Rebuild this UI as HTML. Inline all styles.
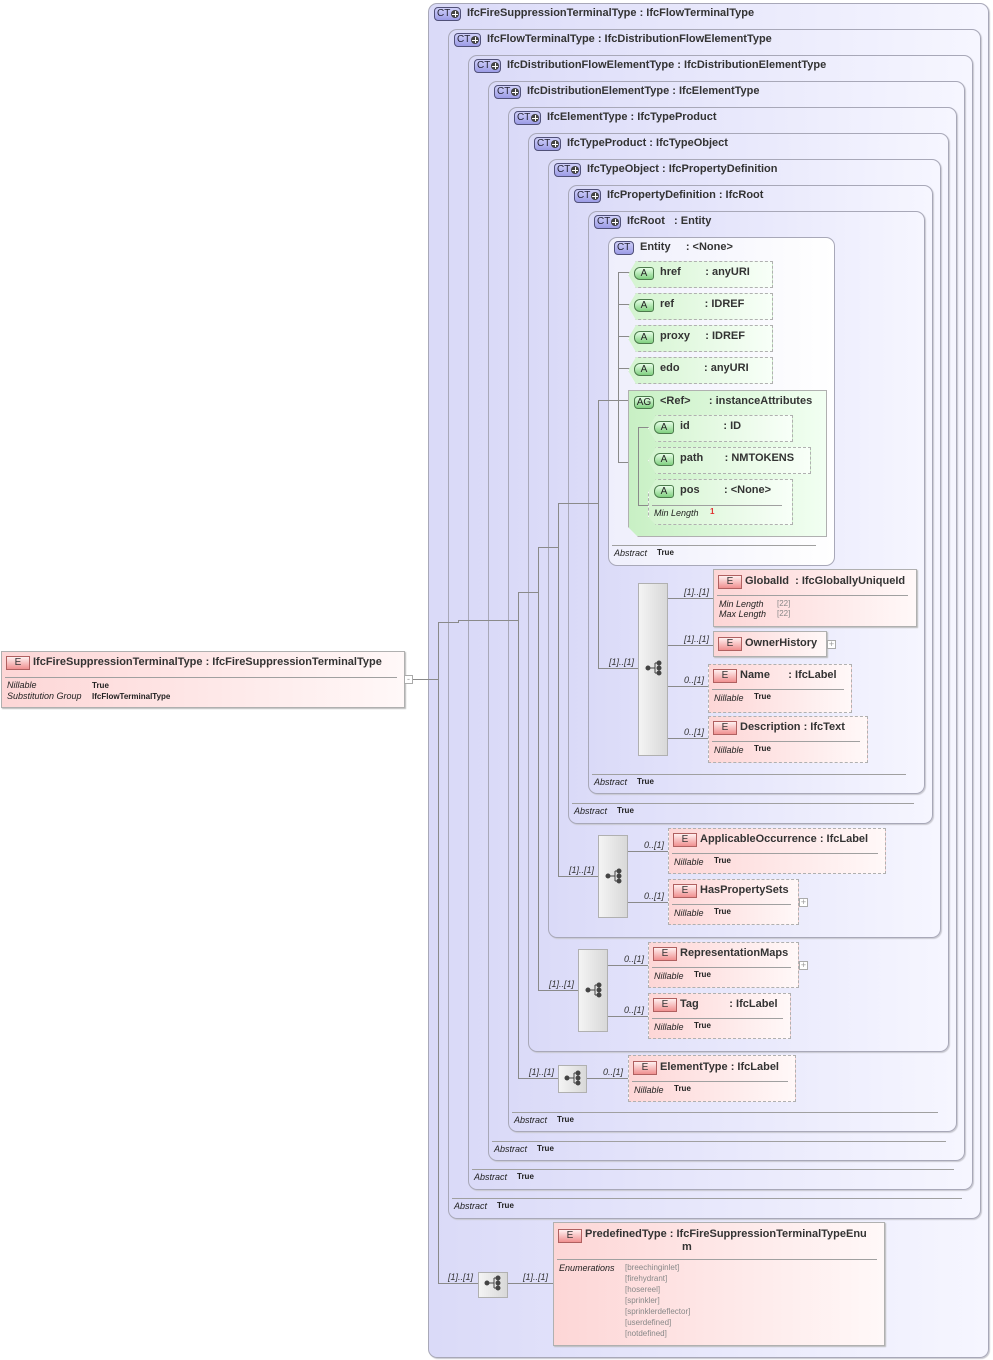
<!DOCTYPE html>
<html><head><meta charset="utf-8"><style>
*{margin:0;padding:0;box-sizing:border-box}
body{width:993px;height:1360px;background:#fff;position:relative;overflow:hidden;font-family:"Liberation Sans",Arial,sans-serif;font-size:11px;color:#222}
div,span{position:absolute}
.ct{border:1px solid #a8a8b8;border-radius:9px;background:linear-gradient(to right,#dadaf8,#f6f6ff);box-shadow:1px 1px 1px #c8c8d0}
.en{border:1px solid #a8a8b8;border-radius:9px;background:linear-gradient(to right,#efeffc,#fff)}
.hd{white-space:pre;font-size:11px;color:#333;font-weight:bold}
.cti{width:27px;height:14px;border:1px solid #505078;border-radius:4px;background:linear-gradient(#d0d0fa,#9c9ce6);font-size:10px;line-height:12px;padding-left:2px;color:#223}
.cti b{position:absolute;left:16px;top:2px;width:8px;height:8px;border-radius:50%;background:#444;}
.cti b:before{content:"";position:absolute;left:1px;top:3.5px;width:6px;height:1px;background:#fff}
.cti b:after{content:"";position:absolute;left:3.5px;top:1px;width:1px;height:6px;background:#fff}
.ei{width:24px;height:14px;border:1px solid #b06060;background:linear-gradient(#fff0f0,#f09090);font-size:10px;line-height:12px;text-align:center;color:#333}
.el{border:1px solid #b0b0b0;background:linear-gradient(to right,#fdd6d6,#fff8f8);box-shadow:1px 1px 1px #bbb}
.eld{border:1px dashed #b0b0b0;background:linear-gradient(to right,#fdd6d6,#fff8f8)}
.at{border:1px dashed #b0b0b0;background:linear-gradient(to right,#d4f4d0,#f8fff8);clip-path:polygon(8px 0,100% 0,100% 100%,8px 100%,0 50%)}
.ai{width:20px;height:13px;border:1px solid #4c7a4c;border-radius:6px 3px 3px 6px;background:linear-gradient(#e8ffe8,#80d080);font-size:10px;line-height:11px;text-align:center;color:#222}
.l{background:#8a8a8a}
.h{height:1px}.v{width:1px}
.it{font-style:italic;font-size:9px;color:#222}
.b8{font-size:8px;font-weight:bold;color:#222}
.sep{height:1px;background:#a0a0a0}
.seq{border:1px solid #b0b0b0;background:linear-gradient(to right,#f4f4f4,#d8d8d8)}
.card{font-style:italic;font-size:9px;color:#333}
.pl{width:9px;height:9px;border:1px solid #aaa;background:#fff;font-size:9px;line-height:7px;text-align:center;color:#999}
</style></head><body>

<div class="ct" style="left:428px;top:3px;width:561px;height:1355px"></div>
<div class="ct" style="left:448px;top:29px;width:533px;height:1190px"></div>
<div class="ct" style="left:468px;top:55px;width:505px;height:1135px"></div>
<div class="ct" style="left:488px;top:81px;width:477px;height:1080px"></div>
<div class="ct" style="left:508px;top:107px;width:449px;height:1025px"></div>
<div class="ct" style="left:528px;top:133px;width:421px;height:919px"></div>
<div class="ct" style="left:548px;top:159px;width:393px;height:779px"></div>
<div class="ct" style="left:568px;top:185px;width:365px;height:639px"></div>
<div class="ct" style="left:588px;top:211px;width:337px;height:583px"></div>
<div class="en" style="left:608px;top:237px;width:227px;height:329px"></div>

<div class="cti" style="left:434px;top:7px">CT<b></b></div><div class="hd" style="left:467px;top:7px">IfcFireSuppressionTerminalType : IfcFlowTerminalType</div>
<div class="cti" style="left:454px;top:33px">CT<b></b></div><div class="hd" style="left:487px;top:33px">IfcFlowTerminalType : IfcDistributionFlowElementType</div>
<div class="cti" style="left:474px;top:59px">CT<b></b></div><div class="hd" style="left:507px;top:59px">IfcDistributionFlowElementType : IfcDistributionElementType</div>
<div class="cti" style="left:494px;top:85px">CT<b></b></div><div class="hd" style="left:527px;top:85px">IfcDistributionElementType : IfcElementType</div>
<div class="cti" style="left:514px;top:111px">CT<b></b></div><div class="hd" style="left:547px;top:111px">IfcElementType : IfcTypeProduct</div>
<div class="cti" style="left:534px;top:137px">CT<b></b></div><div class="hd" style="left:567px;top:137px">IfcTypeProduct : IfcTypeObject</div>
<div class="cti" style="left:554px;top:163px">CT<b></b></div><div class="hd" style="left:587px;top:163px">IfcTypeObject : IfcPropertyDefinition</div>
<div class="cti" style="left:574px;top:189px">CT<b></b></div><div class="hd" style="left:607px;top:189px">IfcPropertyDefinition : IfcRoot</div>
<div class="cti" style="left:594px;top:215px">CT<b></b></div><div class="hd" style="left:627px;top:215px">IfcRoot   : Entity</div>
<div class="cti" style="left:614px;top:241px;width:20px">CT</div><div class="hd" style="left:640px;top:241px">Entity     : &lt;None&gt;</div>

<div class="sep" style="left:612px;top:545px;width:204px"></div><div class="it" style="left:614px;top:548px">Abstract</div><div class="b8" style="left:657px;top:548px">True</div>
<div class="sep" style="left:592px;top:774px;width:314px"></div><div class="it" style="left:594px;top:777px">Abstract</div><div class="b8" style="left:637px;top:777px">True</div>
<div class="sep" style="left:572px;top:803px;width:342px"></div><div class="it" style="left:574px;top:806px">Abstract</div><div class="b8" style="left:617px;top:806px">True</div>
<div class="sep" style="left:512px;top:1112px;width:426px"></div><div class="it" style="left:514px;top:1115px">Abstract</div><div class="b8" style="left:557px;top:1115px">True</div>
<div class="sep" style="left:492px;top:1141px;width:454px"></div><div class="it" style="left:494px;top:1144px">Abstract</div><div class="b8" style="left:537px;top:1144px">True</div>
<div class="sep" style="left:472px;top:1169px;width:482px"></div><div class="it" style="left:474px;top:1172px">Abstract</div><div class="b8" style="left:517px;top:1172px">True</div>
<div class="sep" style="left:452px;top:1198px;width:510px"></div><div class="it" style="left:454px;top:1201px">Abstract</div><div class="b8" style="left:497px;top:1201px">True</div>

<div class="l h" style="left:412px;top:679px;width:26px"></div>
<div class="l v" style="left:438px;top:622px;height:662px"></div>
<div class="l h" style="left:438px;top:622px;width:20px"></div>
<div class="l v" style="left:458px;top:620px;height:3px"></div>
<div class="l h" style="left:458px;top:620px;width:60px"></div>
<div class="l v" style="left:518px;top:592px;height:487px"></div>
<div class="l h" style="left:518px;top:592px;width:20px"></div>
<div class="l v" style="left:538px;top:547px;height:444px"></div>
<div class="l h" style="left:538px;top:547px;width:20px"></div>
<div class="l v" style="left:558px;top:503px;height:374px"></div>
<div class="l h" style="left:558px;top:503px;width:40px"></div>
<div class="l v" style="left:598px;top:400px;height:269px"></div>
<div class="l h" style="left:598px;top:400px;width:30px"></div>
<div class="l h" style="left:438px;top:1283px;width:40px"></div>
<div class="l h" style="left:508px;top:1283px;width:45px"></div>
<div class="l h" style="left:518px;top:1078px;width:40px"></div>
<div class="l h" style="left:587px;top:1078px;width:41px"></div>
<div class="l h" style="left:538px;top:990px;width:40px"></div>
<div class="l h" style="left:607px;top:965px;width:41px"></div>
<div class="l h" style="left:607px;top:1016px;width:41px"></div>
<div class="l h" style="left:558px;top:876px;width:40px"></div>
<div class="l h" style="left:627px;top:851px;width:41px"></div>
<div class="l h" style="left:627px;top:902px;width:41px"></div>
<div class="l h" style="left:598px;top:668px;width:40px"></div>
<div class="l h" style="left:667px;top:598px;width:46px"></div>
<div class="l h" style="left:667px;top:645px;width:46px"></div>
<div class="l h" style="left:667px;top:686px;width:41px"></div>
<div class="l h" style="left:667px;top:738px;width:41px"></div>
<div class="l v" style="left:618px;top:272px;height:191px"></div>
<div class="l h" style="left:618px;top:272px;width:12px"></div>
<div class="l h" style="left:618px;top:304px;width:12px"></div>
<div class="l h" style="left:618px;top:336px;width:12px"></div>
<div class="l h" style="left:618px;top:368px;width:12px"></div>
<div class="l h" style="left:618px;top:462px;width:30px"></div>

<div class="at" style="left:628px;top:261px;width:145px;height:27px"></div>
<div class="at" style="left:628px;top:293px;width:145px;height:27px"></div>
<div class="at" style="left:628px;top:325px;width:145px;height:27px"></div>
<div class="at" style="left:628px;top:357px;width:145px;height:27px"></div>
<div class="ai" style="left:634px;top:267px">A</div><div class="hd" style="left:660px;top:266px">href        : anyURI</div>
<div class="ai" style="left:634px;top:299px">A</div><div class="hd" style="left:660px;top:298px">ref          : IDREF</div>
<div class="ai" style="left:634px;top:331px">A</div><div class="hd" style="left:660px;top:330px">proxy     : IDREF</div>
<div class="ai" style="left:634px;top:363px">A</div><div class="hd" style="left:660px;top:362px">edo        : anyURI</div>

<div style="left:628px;top:390px;width:199px;height:147px;border:1px solid #b0b0b0;background:linear-gradient(to right,#c8f0c4,#f2fff2);clip-path:polygon(0 0,100% 0,100% 100%,10px 100%,0 calc(100% - 10px));box-shadow:2px 2px 0 #aaa"></div>
<div class="ai" style="left:634px;top:396px;width:20px;border-radius:4px">AG</div><div class="hd" style="left:660px;top:395px">&lt;Ref&gt;      : instanceAttributes</div>
<div class="l v" style="left:638px;top:427px;height:79px"></div>
<div class="l h" style="left:638px;top:427px;width:12px"></div>
<div class="l h" style="left:638px;top:505px;width:12px"></div>
<div class="at" style="left:648px;top:415px;width:145px;height:27px"></div>
<div class="at" style="left:648px;top:447px;width:163px;height:27px"></div>
<div class="at" style="left:648px;top:479px;width:145px;height:46px;clip-path:polygon(8px 0,100% 0,100% 100%,8px 100%,0 calc(100% - 8px),0 13px)"></div>
<div class="ai" style="left:654px;top:421px">A</div><div class="hd" style="left:680px;top:420px">id           : ID</div>
<div class="ai" style="left:654px;top:453px">A</div><div class="hd" style="left:680px;top:452px">path       : NMTOKENS</div>
<div class="ai" style="left:654px;top:485px">A</div><div class="hd" style="left:680px;top:484px">pos        : &lt;None&gt;</div>
<div class="sep" style="left:652px;top:505px;width:130px"></div>
<div class="it" style="left:654px;top:508px">Min Length</div><div style="left:710px;top:507px;font-size:8px;color:#e03030;font-weight:bold">1</div>

<div class="seq" style="left:638px;top:583px;width:30px;height:173px"></div>
<div class="seq" style="left:598px;top:835px;width:30px;height:83px"></div>
<div class="seq" style="left:578px;top:949px;width:30px;height:83px"></div>
<div class="seq" style="left:558px;top:1065px;width:29px;height:28px"></div>
<div class="seq" style="left:478px;top:1272px;width:30px;height:26px"></div>
<svg style="position:absolute;left:0;top:0" width="993" height="1360">
<g fill="#444" stroke="#444" stroke-width="1">
<g transform="translate(645,661)"><circle cx="3" cy="7" r="2"/><line x1="3" y1="7" x2="10" y2="7"/><line x1="10" y1="2" x2="10" y2="12"/><line x1="10" y1="2" x2="14" y2="2"/><line x1="10" y1="12" x2="14" y2="12"/><circle cx="14" cy="2" r="2"/><circle cx="14" cy="7" r="2"/><circle cx="14" cy="12" r="2"/></g>
<g transform="translate(605,869)"><circle cx="3" cy="7" r="2"/><line x1="3" y1="7" x2="10" y2="7"/><line x1="10" y1="2" x2="10" y2="12"/><line x1="10" y1="2" x2="14" y2="2"/><line x1="10" y1="12" x2="14" y2="12"/><circle cx="14" cy="2" r="2"/><circle cx="14" cy="7" r="2"/><circle cx="14" cy="12" r="2"/></g>
<g transform="translate(585,983)"><circle cx="3" cy="7" r="2"/><line x1="3" y1="7" x2="10" y2="7"/><line x1="10" y1="2" x2="10" y2="12"/><line x1="10" y1="2" x2="14" y2="2"/><line x1="10" y1="12" x2="14" y2="12"/><circle cx="14" cy="2" r="2"/><circle cx="14" cy="7" r="2"/><circle cx="14" cy="12" r="2"/></g>
<g transform="translate(564,1071)"><circle cx="3" cy="7" r="2"/><line x1="3" y1="7" x2="10" y2="7"/><line x1="10" y1="2" x2="10" y2="12"/><line x1="10" y1="2" x2="14" y2="2"/><line x1="10" y1="12" x2="14" y2="12"/><circle cx="14" cy="2" r="2"/><circle cx="14" cy="7" r="2"/><circle cx="14" cy="12" r="2"/></g>
<g transform="translate(484,1276)"><circle cx="3" cy="7" r="2"/><line x1="3" y1="7" x2="10" y2="7"/><line x1="10" y1="2" x2="10" y2="12"/><line x1="10" y1="2" x2="14" y2="2"/><line x1="10" y1="12" x2="14" y2="12"/><circle cx="14" cy="2" r="2"/><circle cx="14" cy="7" r="2"/><circle cx="14" cy="12" r="2"/></g>
</g></svg>

<div class="card" style="left:609px;top:657px">[1]..[1]</div>
<div class="card" style="left:684px;top:587px">[1]..[1]</div>
<div class="card" style="left:684px;top:634px">[1]..[1]</div>
<div class="card" style="left:684px;top:675px">0..[1]</div>
<div class="card" style="left:684px;top:727px">0..[1]</div>
<div class="card" style="left:569px;top:865px">[1]..[1]</div>
<div class="card" style="left:644px;top:840px">0..[1]</div>
<div class="card" style="left:644px;top:891px">0..[1]</div>
<div class="card" style="left:549px;top:979px">[1]..[1]</div>
<div class="card" style="left:624px;top:954px">0..[1]</div>
<div class="card" style="left:624px;top:1005px">0..[1]</div>
<div class="card" style="left:529px;top:1067px">[1]..[1]</div>
<div class="card" style="left:603px;top:1067px">0..[1]</div>
<div class="card" style="left:448px;top:1272px">[1]..[1]</div>
<div class="card" style="left:523px;top:1272px">[1]..[1]</div>

<div class="el" style="left:713px;top:569px;width:204px;height:58px"></div>
<div class="ei" style="left:718px;top:575px">E</div><div class="hd" style="left:745px;top:575px">GlobalId  : IfcGloballyUniqueId</div>
<div class="sep" style="left:717px;top:595px;width:191px"></div>
<div class="it" style="left:719px;top:599px;line-height:10px">Min Length<br>Max Length</div><div style="left:777px;top:599px;font-size:8px;line-height:10px;color:#888">[22]<br>[22]</div>

<div class="el" style="left:713px;top:631px;width:114px;height:26px"></div>
<div class="ei" style="left:718px;top:637px">E</div><div class="hd" style="left:745px;top:637px">OwnerHistory</div>
<div class="pl" style="left:827px;top:640px">+</div>

<div class="eld" style="left:708px;top:664px;width:144px;height:49px"></div>
<div class="ei" style="left:713px;top:669px">E</div><div class="hd" style="left:740px;top:669px">Name      : IfcLabel</div>
<div class="sep" style="left:712px;top:689px;width:132px"></div><div class="it" style="left:714px;top:693px">Nillable</div><div class="b8" style="left:754px;top:692px">True</div>

<div class="eld" style="left:708px;top:716px;width:160px;height:47px"></div>
<div class="ei" style="left:713px;top:721px">E</div><div class="hd" style="left:740px;top:721px">Description : IfcText</div>
<div class="sep" style="left:712px;top:741px;width:148px"></div><div class="it" style="left:714px;top:745px">Nillable</div><div class="b8" style="left:754px;top:744px">True</div>

<div class="eld" style="left:668px;top:828px;width:218px;height:46px"></div>
<div class="ei" style="left:673px;top:833px">E</div><div class="hd" style="left:700px;top:833px">ApplicableOccurrence : IfcLabel</div>
<div class="sep" style="left:672px;top:853px;width:206px"></div><div class="it" style="left:674px;top:857px">Nillable</div><div class="b8" style="left:714px;top:856px">True</div>

<div class="eld" style="left:668px;top:879px;width:131px;height:46px"></div>
<div class="ei" style="left:673px;top:884px">E</div><div class="hd" style="left:700px;top:884px">HasPropertySets</div>
<div class="sep" style="left:672px;top:904px;width:119px"></div><div class="it" style="left:674px;top:908px">Nillable</div><div class="b8" style="left:714px;top:907px">True</div>
<div class="pl" style="left:799px;top:898px">+</div>

<div class="eld" style="left:648px;top:942px;width:151px;height:46px"></div>
<div class="ei" style="left:653px;top:947px">E</div><div class="hd" style="left:680px;top:947px">RepresentationMaps</div>
<div class="sep" style="left:652px;top:967px;width:139px"></div><div class="it" style="left:654px;top:971px">Nillable</div><div class="b8" style="left:694px;top:970px">True</div>
<div class="pl" style="left:799px;top:961px">+</div>

<div class="eld" style="left:648px;top:993px;width:143px;height:46px"></div>
<div class="ei" style="left:653px;top:998px">E</div><div class="hd" style="left:680px;top:998px">Tag          : IfcLabel</div>
<div class="sep" style="left:652px;top:1018px;width:131px"></div><div class="it" style="left:654px;top:1022px">Nillable</div><div class="b8" style="left:694px;top:1021px">True</div>

<div class="eld" style="left:628px;top:1055px;width:168px;height:47px"></div>
<div class="ei" style="left:633px;top:1061px">E</div><div class="hd" style="left:660px;top:1061px">ElementType : IfcLabel</div>
<div class="sep" style="left:632px;top:1081px;width:156px"></div><div class="it" style="left:634px;top:1085px">Nillable</div><div class="b8" style="left:674px;top:1084px">True</div>

<div class="el" style="left:553px;top:1222px;width:332px;height:124px"></div>
<div class="ei" style="left:558px;top:1229px">E</div><div class="hd" style="left:585px;top:1228px">PredefinedType : IfcFireSuppressionTerminalTypeEnu</div>
<div class="hd" style="left:682px;top:1241px">m</div>
<div class="sep" style="left:557px;top:1259px;width:320px"></div>
<div class="it" style="left:559px;top:1263px">Enumerations</div>
<div style="left:625px;top:1262px;font-size:8px;line-height:11px;color:#888">[breechinginlet]<br>[firehydrant]<br>[hosereel]<br>[sprinkler]<br>[sprinklerdeflector]<br>[userdefined]<br>[notdefined]</div>

<div class="el" style="left:1px;top:651px;width:404px;height:57px"></div>
<div class="ei" style="left:6px;top:656px">E</div><div class="hd" style="left:33px;top:656px">IfcFireSuppressionTerminalType : IfcFireSuppressionTerminalType</div>
<div class="sep" style="left:5px;top:677px;width:392px"></div>
<div class="it" style="left:7px;top:680px;line-height:11px">Nillable<br>Substitution Group</div>
<div class="b8" style="left:92px;top:680px;line-height:11px">True<br>IfcFlowTerminalType</div>
<div class="pl" style="left:404px;top:675px;line-height:6px">-</div>
</body></html>
